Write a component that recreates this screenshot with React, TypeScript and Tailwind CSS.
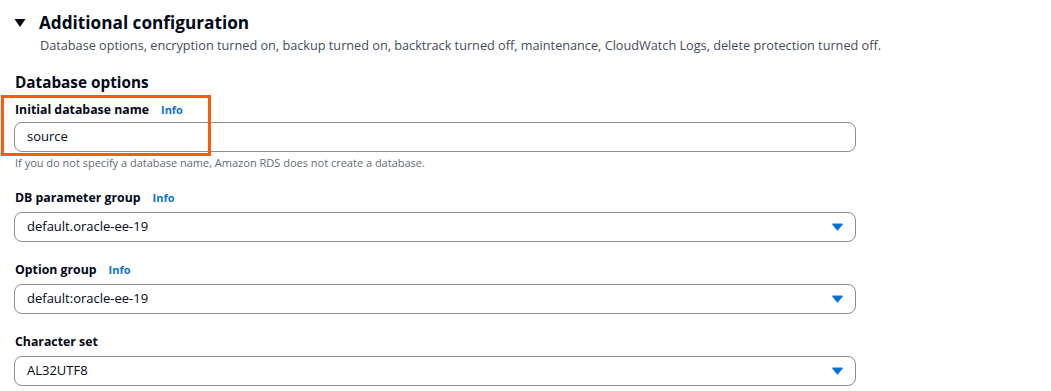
import React from "react";

const font = { fontFamily: '"Open Sans", "Noto Sans", sans-serif' };

function Caret() {
  return (
    <svg width="11" height="8" viewBox="0 0 12 8" className="shrink-0">
      <path d="M1 1 L11 1 L6 7 Z" fill="#0972d3" stroke="#0972d3" strokeWidth="1.5" strokeLinejoin="round" />
    </svg>
  );
}

function Label({ text, info }: { text: string; info?: boolean }) {
  return (
    <div className="flex items-baseline gap-[12px] h-[20px] pl-[1px]">
      <span className="text-[12.3px] font-bold text-[#000716]">{text}</span>
      {info && <span className="text-[11px] font-bold text-[#0972d3]">Info</span>}
    </div>
  );
}

function Select({ value }: { value: string }) {
  return (
    <div className="flex items-center justify-between h-[30px] w-[842px] rounded-[8px] border border-[#8c8c94] pl-[12px] pr-[12px] bg-white">
      <span className="text-[13px] text-[#000716]">{value}</span>
      <Caret />
    </div>
  );
}

export default function App() {
  return (
    <div className="w-[1051px] h-[391px] bg-white overflow-hidden relative" style={font}>
      <div className="pl-[14px] pt-[10px]">
        <div className="flex items-center gap-[13px]">
          <svg width="12" height="10" viewBox="0 0 12 10">
            <path d="M0.5 1 L11.5 1 L6 9 Z" fill="#000716" />
          </svg>
          <span className="text-[17.2px] font-bold text-[#000716] leading-[26px]">Additional configuration</span>
        </div>
        <div className="pl-[26px] text-[12.7px] text-[#414d5c] leading-[18px]">
          Database options, encryption turned on, backup turned on, backtrack turned off, maintenance, CloudWatch Logs, delete protection turned off.
        </div>

        <div className="mt-[17px] text-[15.3px] font-bold text-[#000716] leading-[22px] pl-[1px]">Database options</div>

        <div className="mt-[8px]">
          <Label text="Initial database name" info />
          <div className="mt-[1px] flex items-center h-[30px] w-[842px] rounded-[8px] border border-[#8c8c94] pl-[12px] bg-white">
            <span className="text-[13px] text-[#000716]">source</span>
          </div>
          <div className="mt-[4px] pl-[1px] text-[11px] text-[#5f6b7a] leading-[14px]">
            If you do not specify a database name, Amazon RDS does not create a database.
          </div>
        </div>

        <div className="mt-[19px]">
          <Label text="DB parameter group" info />
          <div className="mt-[3px]">
            <Select value="default.oracle-ee-19" />
          </div>
        </div>

        <div className="mt-[19px]">
          <Label text="Option group" info />
          <div className="mt-[3px]">
            <Select value="default:oracle-ee-19" />
          </div>
        </div>

        <div className="mt-[19px]">
          <Label text="Character set" />
          <div className="mt-[3px]">
            <Select value="AL32UTF8" />
          </div>
        </div>
      </div>

      <div className="absolute left-[1px] top-[95px] w-[210px] h-[61px] border-[3px] border-[#fb5a0c] pointer-events-none" />
    </div>
  );
}
